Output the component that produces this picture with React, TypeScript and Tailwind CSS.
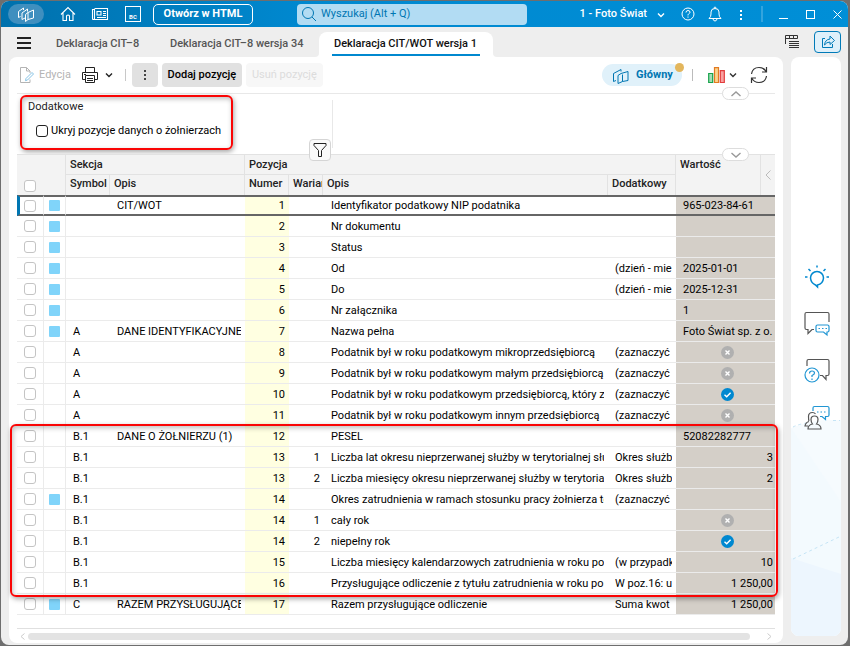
import type { ReactNode } from "react";
import { clsx } from "clsx";

type Value = string | boolean;

type Row = {
  marked?: boolean;
  symbol?: string;
  section?: string;
  number: number;
  variant?: number;
  name: string;
  extra?: string;
  value?: Value;
  numeric?: boolean;
};

const rows: Row[] = [
  { marked: true, section: "CIT/WOT", number: 1, name: "Identyfikator podatkowy NIP podatnika", value: "965-023-84-61" },
  { marked: true, number: 2, name: "Nr dokumentu" },
  { marked: true, number: 3, name: "Status" },
  { marked: true, number: 4, name: "Od", extra: "(dzień - mie", value: "2025-01-01" },
  { marked: true, number: 5, name: "Do", extra: "(dzień - mie", value: "2025-12-31" },
  { marked: true, number: 6, name: "Nr załącznika", value: "1" },
  { marked: true, symbol: "A", section: "DANE IDENTYFIKACYJNE", number: 7, name: "Nazwa pełna", value: "Foto Świat sp. z o." },
  { symbol: "A", number: 8, name: "Podatnik był w roku podatkowym mikroprzedsiębiorcą", extra: "(zaznaczyć", value: false },
  { symbol: "A", number: 9, name: "Podatnik był w roku podatkowym małym przedsiębiorcą", extra: "(zaznaczyć", value: false },
  { symbol: "A", number: 10, name: "Podatnik był w roku podatkowym przedsiębiorcą, który z", extra: "(zaznaczyć", value: true },
  { symbol: "A", number: 11, name: "Podatnik był w roku podatkowym innym przedsiębiorcą", extra: "(zaznaczyć", value: false },
  { symbol: "B.1", section: "DANE O ŻOŁNIERZU (1)", number: 12, name: "PESEL", value: "52082282777" },
  { symbol: "B.1", number: 13, variant: 1, name: "Liczba lat okresu nieprzerwanej służby w terytorialnej słu", extra: "Okres służb", value: "3", numeric: true },
  { symbol: "B.1", number: 13, variant: 2, name: "Liczba miesięcy okresu nieprzerwanej służby w terytoria", extra: "Okres służb", value: "2", numeric: true },
  { marked: true, symbol: "B.1", number: 14, name: "Okres zatrudnienia w ramach stosunku pracy żołnierza te", extra: "(zaznaczyć" },
  { symbol: "B.1", number: 14, variant: 1, name: "cały rok", value: false },
  { symbol: "B.1", number: 14, variant: 2, name: "niepełny rok", value: true },
  { symbol: "B.1", number: 15, name: "Liczba miesięcy kalendarzowych zatrudnienia w roku po", extra: "(w przypadk", value: "10", numeric: true },
  { symbol: "B.1", number: 16, name: "Przysługujące odliczenie z tytułu zatrudnienia w roku po", extra: "W poz.16: u", value: "1 250,00", numeric: true },
  { marked: true, symbol: "C", section: "RAZEM PRZYSŁUGUJĄCE", number: 17, name: "Razem przysługujące odliczenie", extra: "Suma kwot", value: "1 250,00", numeric: true },
];

type IconProps = {
  className?: string;
  viewBox: string;
  children: ReactNode;
};

function Icon({ className, viewBox, children }: IconProps) {
  return (
    <svg
      className={clsx("shrink-0", className)}
      viewBox={viewBox}
      fill="none"
      stroke="currentColor"
      strokeWidth="1"
      aria-hidden="true"
    >
      {children}
    </svg>
  );
}

function Chevron({ className }: { className?: string }) {
  return (
    <Icon className={clsx("h-2 w-2", className)} viewBox="0 0 8 8">
      <path d="M1 2.500 4 5.500 7 2.500" strokeWidth="1.400" />
    </Icon>
  );
}

function TitleBar() {
  return (
    <header className="flex h-[26px] items-center bg-linear-to-r from-[#0071ad] via-[#0088cf] via-35% to-[#008fd7] pl-[7px] text-white">
      <button aria-label="Start" className="flex h-5 w-9 shrink-0 items-center justify-center rounded-full bg-[#3f8fbf]">
        <Icon className="h-[18px] w-[18px]" viewBox="0 0 18 18">
          <path d="M1.500 12.500V6.500L6.500 3v2M1.500 12.500l2-1M5 14.500V8L10.500 4v2.500M5 14.500l3-1.500M8.500 16.500V9.500L11 7.500v7ZM11 7.500l5.500-2.500v8L11 14.500" />
        </Icon>
      </button>
      <button aria-label="Strona główna" className="ml-4 shrink-0">
        <Icon className="h-4 w-4" viewBox="0 0 16 16">
          <path d="M1 8.500 8 1.500l7 7M3 7v7.500h3.500V10q0-1 1.500-1t1.500 1v4.500H13V7" strokeWidth="1.100" />
        </Icon>
      </button>
      <button aria-label="Aktualności" className="ml-[15px] shrink-0">
        <Icon className="h-4 w-[18px]" viewBox="0 0 18 16">
          <path d="M3.500 2.500h13v11H2q-.5 0-.5-1v-9h2v9q0 1-1 1M6 5.500h4v3.500H6zM12 5.500h3M12 7.500h3M12 9.500h3M6 11.500h9" strokeWidth="1.100" />
        </Icon>
      </button>
      <button aria-label="BC" className="ml-4 flex h-4 w-4 shrink-0 items-end justify-center border border-white text-[6px] leading-[9px] font-bold">
        BC
      </button>
      <button className="ml-3 h-[21px] w-[100px] shrink-0 rounded-[5px] border border-white text-[11px] leading-4 font-bold">
        Otwórz w HTML
      </button>
      <label className="ml-11 flex h-[21px] w-[230px] shrink-0 items-center rounded bg-[#b2dcf3] pl-1 text-[#0076b2]">
        <Icon className="h-4 w-4" viewBox="0 0 16 16">
          <circle cx="7" cy="7" r="5.500" />
          <path d="m11 11 4 4" />
        </Icon>
        <input
          type="search"
          aria-label="Wyszukaj"
          placeholder="Wyszukaj (Alt + Q)"
          className="ml-1 w-full bg-transparent text-[11px] outline-none placeholder:text-[#0076b2]"
        />
      </label>
      <button className="ml-auto flex shrink-0 items-center gap-2.5 pt-px text-[11px] font-medium">
        1 - Foto Świat
        <Chevron />
      </button>
      <button aria-label="Pomoc" className="ml-4 shrink-0">
        <Icon className="h-[14px] w-[14px]" viewBox="0 0 14 14">
          <circle cx="7" cy="7" r="6" />
          <path d="M5 5.500q0-2 2-2t2 1.700Q9 6.300 7.500 7 7 7.300 7 8.500M7 9.500v1.200" />
        </Icon>
      </button>
      <button aria-label="Powiadomienia" className="ml-[13px] shrink-0">
        <Icon className="h-4 w-[14px]" viewBox="0 0 14 16">
          <path d="M1 12.500q2-1.500 2-4.500V6q0-3.500 4-3.500T11 6v2q0 3 2 4.500ZM6 2.500q0-1.500 1-1.500t1 1.500M5 13q.5 2 2 2t2-2" />
        </Icon>
      </button>
      <button aria-label="Więcej" className="ml-[18px] flex shrink-0 flex-col gap-0.5 pt-px">
        <i className="h-0.5 w-0.5 bg-white" />
        <i className="h-0.5 w-0.5 bg-white" />
        <i className="h-0.5 w-0.5 bg-white" />
      </button>
      <div className="ml-[19px] h-4 w-0.5 bg-white/20" />
      <button aria-label="Minimalizuj" className="ml-4 flex h-[11px] w-[9px] shrink-0 items-end">
        <i className="mb-px h-px w-full bg-white" />
      </button>
      <button aria-label="Maksymalizuj" className="ml-[18px] h-[9px] w-[9px] shrink-0 border border-white" />
      <button aria-label="Zamknij" className="mr-1.5 ml-[18px] shrink-0">
        <Icon className="h-[9px] w-[9px]" viewBox="0 0 9 9">
          <path d="m.5.5 8 8M8.500.5l-8 8" />
        </Icon>
      </button>
    </header>
  );
}

function Tabs() {
  return (
    <nav className="flex h-[30px] items-center pl-4 text-[11px] font-medium text-[#555]">
      <button aria-label="Menu" className="flex w-[14px] shrink-0 flex-col gap-[3px] pt-0.5">
        <i className="h-0.5 w-full bg-[#222]" />
        <i className="h-0.5 w-full bg-[#222]" />
        <i className="h-0.5 w-full bg-[#222]" />
      </button>
      <a href="#cit-8" className="ml-[25px] w-[114px] shrink-0 pt-1">Deklaracja CIT–8</a>
      <a href="#cit-8-34" className="w-[149px] shrink-0 pt-1">Deklaracja CIT–8 wersja 34</a>
      <a href="#cit-wot" aria-current="page" className="relative flex h-[25px] w-[174px] shrink-0 justify-center self-end rounded-t-lg bg-white text-[#111]">
        <span className="absolute bottom-0 -left-1 h-1 w-1 overflow-hidden">
          <i className="block h-1 w-1 rounded-br shadow-[2px_2px_0_2px_white]" />
        </span>
        <span className="h-6 w-[148px] border-b-2 border-[#0088cf] pt-px pl-0.5 leading-[22px] whitespace-nowrap">Deklaracja CIT/WOT wersja 1</span>
        <span className="absolute -right-1 bottom-0 h-1 w-1 overflow-hidden">
          <i className="block h-1 w-1 rounded-bl shadow-[-2px_2px_0_2px_white]" />
        </span>
      </a>
      <button aria-label="Układ zakładek" className="ml-auto shrink-0 text-[#333]">
        <Icon className="h-[14px] w-4" viewBox="0 0 16 14">
          <path d="M1.500 9V.5h12v3h-12M5.500.5v3M9.500.5v3M5 6.500h10M5 8.500h10M5 10.500h10M5 12.500h10" />
        </Icon>
      </button>
      <button aria-label="Udostępnij" className="mr-[7px] ml-[14px] flex h-[22px] w-[27px] shrink-0 items-center justify-center rounded border border-[#007ab8] bg-[#dff0fa] text-[#007ab8]">
        <Icon className="h-4 w-4" viewBox="0 0 16 16">
          <path d="M5 4.500H2.500v9h10V10M4.500 11Q5 5.500 10 5V2l4.500 4.500L10 10.500V8Q6.500 8 4.500 11Z" />
        </Icon>
      </button>
    </nav>
  );
}

function Toolbar() {
  return (
    <div className="relative mr-2 ml-2 flex h-[37px] items-center border-b border-[#e8e8e8] text-[11px] text-black">
      <button disabled className="ml-0.5 flex shrink-0 items-center gap-1 text-[#b4b4b4]">
        <Icon className="h-4 w-4" viewBox="0 0 16 16">
          <path d="M11 12.500v3H1.500V.5h6L11 4v2M7.500.5V4H11" />
          <path d="m7 11.500 6-6 1.500 1.500-6 6-2 .7Z" className="stroke-[#86c3e6]" />
        </Icon>
        Edycja
      </button>
      <button aria-label="Drukuj" className="ml-[11px] flex shrink-0 items-center gap-[7px] text-[#222]">
        <Icon className="h-4 w-4" viewBox="0 0 16 16">
          <path d="M3.500 5V.5h9V5M3.500 12.500h-3v-7h15v7h-3M3.500 8.500h9v7h-9zM5 11.500h6M5 13.500h6M2 7.500h2" />
        </Icon>
        <Chevron />
      </button>
      <div className="ml-3 h-3 w-px shrink-0 bg-[#c8c8c8]" />
      <button aria-label="Więcej" className="ml-1.5 flex h-6 w-[26px] shrink-0 flex-col items-center justify-center gap-0.5 rounded bg-[#e1e1e1]">
        <i className="h-0.5 w-0.5 bg-[#444]" />
        <i className="h-0.5 w-0.5 bg-[#444]" />
        <i className="h-0.5 w-0.5 bg-[#444]" />
      </button>
      <button className="ml-1 h-6 w-20 shrink-0 rounded bg-[#e1e1e1] pt-px font-medium whitespace-nowrap">Dodaj pozycję</button>
      <button disabled className="ml-1 h-6 w-[77px] shrink-0 rounded bg-[#f7f7f7] pt-px whitespace-nowrap text-[#dcdcdc]">Usuń pozycję</button>
      <button className="relative ml-auto flex h-[22px] w-20 shrink-0 items-center gap-[7px] rounded-full bg-[#e0f1fa] pt-px pl-[11px] font-bold text-[#0076b2]">
        <Icon className="h-4 w-4" viewBox="0 0 16 16">
          <path d="M3 12.500.5 13.500V5.500L8 1.500v2M5 15.500V7.500L8 5.500l7-2v9l-5.500 1ZM9.500 13.500v-7" />
        </Icon>
        Główny
        <i className="absolute -top-px -right-0.5 h-[9px] w-[9px] rounded-full bg-[#e3b65c]" />
      </button>
      <div className="ml-2.5 h-3 w-px shrink-0 bg-[#bbb]" />
      <button aria-label="Wykresy" className="ml-[15px] flex shrink-0 items-center gap-1 text-[#333]">
        <Icon className="h-4 w-[17px]" viewBox="0 0 17 16">
          <path d="M.7 6.500h4v9h-4z" className="fill-[#a5dcb8] stroke-[#16a34a]" strokeWidth="1.200" />
          <path d="M6.500.7h4v14.800h-4z" className="fill-[#fbd58e] stroke-[#e27a22]" strokeWidth="1.200" />
          <path d="M12.300 3.700h4v11.800h-4z" className="fill-[#f9a1a1] stroke-[#e23c3c]" strokeWidth="1.200" />
        </Icon>
        <Chevron />
      </button>
      <button aria-label="Odśwież" className="mr-[7px] ml-[13px] shrink-0 text-[#333]">
        <Icon className="h-[18px] w-[18px]" viewBox="0 0 18 18">
          <path d="M1.500 8Q2.500 1.500 9 1.500q5 0 7.500 4.500M16.500 1v5H12M16.500 10q-1 6.500-7.500 6.500-5 0-7.500-4.500M1.500 17v-5H6" strokeWidth="1.200" />
        </Icon>
      </button>
      <button aria-label="Zwiń panel" className="absolute right-[26px] -bottom-[7px] flex h-[13px] w-[27px] items-center justify-center rounded-full border border-[#ddd] bg-white text-[#999]">
        <Icon className="h-1.5 w-2.5" viewBox="0 0 10 6">
          <path d="M.5 5 5 1l4.500 4" strokeWidth="1.400" />
        </Icon>
      </button>
    </div>
  );
}

function FilterPane() {
  return (
    <div className="relative mx-2 h-[60px] pt-px pl-[3px] text-[11px] text-[#222]">
      <fieldset className="h-[55px] w-[213px] rounded-md border-2 border-[#fa0505] pl-1.5 shadow-[1px_2px_5px_rgba(0,0,0,0.35),inset_1px_2px_5px_rgba(0,0,0,0.25)]">
        <legend className="float-left w-full pt-1 leading-3">Dodatkowe</legend>
        <label className="clear-both flex items-center gap-[3px] pt-2.5 pl-2 leading-4 whitespace-nowrap text-black">
          <input type="checkbox" className="h-3 w-3 appearance-none rounded-[3px] border border-[#222] bg-white" />
          Ukryj pozycje danych o żołnierzach
        </label>
      </fieldset>
      <div className="absolute top-1.5 left-[315px] h-12 w-px bg-[#e8e8e8]" />
      <button aria-label="Filtr" className="absolute top-[45px] left-[292px] z-10 flex h-[22px] w-[22px] items-center justify-center rounded border border-[#d5d5d5] bg-[#fafafa] text-[#222]">
        <Icon className="h-[14px] w-[14px]" viewBox="0 0 14 14">
          <path d="M1 .5h12v2L8.500 7.500v6h-3v-6L1 2.500Z" />
        </Icon>
      </button>
      <button aria-label="Rozwiń panel" className="absolute right-[26px] -bottom-[7px] z-10 flex h-[13px] w-[27px] items-center justify-center rounded-full border border-[#ddd] bg-white text-[#999]">
        <Icon className="h-1.5 w-2.5" viewBox="0 0 10 6">
          <path d="M.5 1 5 5l4.500-4" strokeWidth="1.400" />
        </Icon>
      </button>
    </div>
  );
}

function ValueMark({ checked }: { checked: boolean }) {
  return (
    <svg className="mx-auto h-[13px] w-[13px]" viewBox="0 0 13 13" role="img" aria-label={checked ? "tak" : "nie"}>
      <circle cx="6.500" cy="6.500" r="6.500" className={checked ? "fill-[#0088d0]" : "fill-[#b0b0b0]"} />
      <path
        d={checked ? "M3.500 6.700 5.700 8.800 9.600 4.800" : "m4.500 4.500 4 4M8.500 4.500l-4 4"}
        fill="none"
        stroke="white"
        strokeWidth="1.400"
      />
    </svg>
  );
}

const head = "overflow-hidden border-[#e2e2e2] pl-1 text-left align-top font-medium whitespace-nowrap";
const box = "block h-3 w-3 appearance-none rounded-[3px] border border-[#c4c4c4] bg-white";

function DeclarationTable() {
  return (
    <table className="w-full table-fixed border-separate border-spacing-0 text-[11px] leading-4 text-black">
      <colgroup>
        <col className="w-[27px]" />
        <col className="w-[22px]" />
        <col className="w-11" />
        <col className="w-[135px]" />
        <col className="w-11" />
        <col className="w-[34px]" />
        <col />
        <col className="w-[68px]" />
        <col className="w-[85px]" />
        <col className="w-[14px]" />
      </colgroup>
      <thead className="bg-[#f3f3f3] text-[#222]">
        <tr className="h-[21px]">
          <th colSpan={2} rowSpan={2} className="border-t border-r border-[#e2e2e2] pb-[3px] pl-[7px] align-bottom">
            <input type="checkbox" aria-label="Zaznacz wszystkie" className={box} />
          </th>
          <th colSpan={2} className={clsx(head, "border-t border-r border-b pt-0.5")}>Sekcja</th>
          <th colSpan={4} className={clsx(head, "border-t border-r border-b pt-0.5")}>Pozycja</th>
          <th rowSpan={2} className={clsx(head, "border-t border-r pt-0.5")}>Wartość</th>
          <th rowSpan={2} className="border-t border-[#e2e2e2] text-[#bbb]">
            <Icon className="mx-auto h-2.5 w-1.5" viewBox="0 0 6 10">
              <path d="M5.500.5 1 5l4.500 4.500" />
            </Icon>
          </th>
        </tr>
        <tr className="h-5">
          <th className={clsx(head, "border-r pt-px")}>Symbol</th>
          <th className={clsx(head, "border-r pt-px")}>Opis</th>
          <th className={clsx(head, "border-r pt-px")}>Numer</th>
          <th className={clsx(head, "border-r pt-px")}>Wariant</th>
          <th className={clsx(head, "border-r pt-px")}>Opis</th>
          <th className={clsx(head, "border-r pt-px")}>Dodatkowy</th>
        </tr>
      </thead>
      <tbody>
        {rows.map((row, index) => {
          const selected = index === 0;
          const line = selected ? "border-y-2 border-y-[#666]" : "border-b border-b-[#ebebeb]";
          const cell = clsx("overflow-hidden whitespace-nowrap", line, !selected && "pt-0.5");
          return (
            <tr key={index} className="h-[21px]">
              <td className={clsx(line, "border-r border-r-[#ebebeb]", selected ? "border-l-3 border-l-[#0076b2] pl-1" : "pl-[7px]")}>
                <input type="checkbox" aria-label={`Pozycja ${row.number}`} className={box} />
              </td>
              <td className={clsx(line, "border-r border-r-[#ebebeb] pl-[5px]")}>
                {row.marked && <i className="block h-[11px] w-[11px] rounded-[1px] bg-[#80d4fa]" />}
              </td>
              <td className={clsx(cell, "pl-[7px]")}>{row.symbol}</td>
              <td className={clsx(cell, "pr-1 pl-[7px]")}>
                <div className="overflow-hidden">{row.section}</div>
              </td>
              <td className={clsx(cell, "bg-[#ffffe1] pr-1 text-right")}>{row.number}</td>
              <td className={clsx(cell, "pr-[3px] text-right")}>{row.variant}</td>
              <td className={clsx(cell, "pr-1 pl-2")}>
                <div className="overflow-hidden">{row.name}</div>
              </td>
              <td className={clsx(cell, "pr-1 pl-[7px]")}>
                <div className="overflow-hidden">{row.extra}</div>
              </td>
              {typeof row.value === "boolean" ? (
                <td colSpan={2} className={clsx(line, "bg-[#d4cfc8] pr-0.5 pl-1.5")}>
                  <ValueMark checked={row.value} />
                </td>
              ) : (
                <td colSpan={2} className={clsx(cell, "bg-[#d4cfc8] pr-0.5 pl-[7px]", row.numeric && "text-right")}>
                  {row.value}
                </td>
              )}
            </tr>
          );
        })}
      </tbody>
    </table>
  );
}

function SidePanel() {
  return (
    <aside className="relative mb-[9px] flex w-[50px] shrink-0 flex-col items-center overflow-hidden rounded-lg bg-white pt-[207px]">
      <svg className="absolute inset-x-0 bottom-0 h-[216px] w-full" viewBox="0 0 50 216" preserveAspectRatio="none" aria-hidden="true">
        <path d="M0 8Q25-2 50 0V216H0Z" fill="#f6fbfe" />
        <path d="M0 8 50 82V216H0Z" fill="#f3fafe" />
        <path d="M0 138 50 154V216H0Z" fill="#edf6fe" />
        <path d="M2 7q6-3 14-4M42 .5h7M2 139 48 117" fill="none" stroke="#c5e4f5" strokeDasharray="3 3" />
      </svg>
      <div className="relative flex flex-col gap-[21px] pl-0.5 text-[#555]">
        <button aria-label="Wskazówki" className="text-[#0088cf]">
          <Icon className="h-[26px] w-[26px]" viewBox="0 0 26 26">
            <path d="M13.500 23V21q5.500-1 6-7a6.500 6.500 0 1 0-13 0q.5 5 5 7ZM13 1.500v2M4.500 5l2 2M21.500 5l-2 2M1 13h2.500M22.500 13H25" strokeWidth="1.500" />
          </Icon>
        </button>
        <button aria-label="Czat">
          <Icon className="h-[26px] w-[26px]" viewBox="0 0 26 26">
            <path d="M25 11V3q0-1.500-1.500-1.500h-21Q1 1.500 1 3v14q0 1.500 1.500 1.500H4v4l4-4h2" strokeWidth="1.200" />
            <path d="M13.500 14h10q1.500 0 1.500 1.500v4q0 1.500-1.500 1.500H23v3l-3.500-3h-6q-1.500 0-1.500-1.500v-4Q12 14 13.500 14ZM14.500 17.500h1.500M18 17.500h1.500M21.500 17.500H23" className="stroke-[#2196d3]" strokeWidth="1.200" />
          </Icon>
        </button>
        <button aria-label="Pytania">
          <Icon className="h-[26px] w-[26px]" viewBox="0 0 26 26">
            <path d="M3 8V3q0-1.500 1.500-1.500h19Q25 1.500 25 3v13q0 1.500-1.500 1.500H22v4l-3.500-4H16" strokeWidth="1.200" />
            <circle cx="8" cy="17" r="7" className="stroke-[#2196d3]" strokeWidth="1.200" />
            <path d="M5.500 15.500q0-2.500 2.500-2.500t2.500 2Q10.500 16.500 8 17.500v1.500M8 20.500V22" className="stroke-[#2196d3]" strokeWidth="1.200" />
          </Icon>
        </button>
        <button aria-label="Społeczność">
          <Icon className="h-[26px] w-[26px]" viewBox="0 0 26 26">
            <path d="M9 6V3q0-1.500 1.500-1.500h13Q25 1.500 25 3v7q0 1.500-1.500 1.500h-2v3l-3.500-3h-2M13 7h1.500M16.500 7H18M20 7h1.500" className="stroke-[#2196d3]" strokeWidth="1.200" />
            <path d="M4 24q0-4 4.500-5Q7 17 7 14.500 7 11 10.500 11t3.500 3.500q0 2.500-1.500 4.500 4.500 1 4.500 5ZM5 16Q4.500 15 4.500 11.500q0-4 4-4 2 0 3 1.500M5 16.500q-3.500 1-4 4.500h3" strokeWidth="1.200" />
          </Icon>
        </button>
      </div>
    </aside>
  );
}

export default function App() {
  return (
    <div className="flex min-h-screen bg-[#6e6e6e] py-px pr-0.5 pl-px font-[Roboto,sans-serif]">
      <div className="flex min-w-0 flex-1 flex-col overflow-hidden rounded-lg bg-[#eeeeee]">
        <TitleBar />
        <Tabs />
        <div className="flex flex-1 gap-2 pr-[7px] pl-2">
          <main className="mb-0.5 flex min-w-0 flex-1 flex-col rounded-lg bg-white">
            <Toolbar />
            <FilterPane />
            <div className="relative px-2">
              <DeclarationTable />
              {/* highlighted group: rows 12-16 */}
              <div className="pointer-events-none absolute top-[270px] right-[5px] left-px h-[173px] rounded-md border-2 border-[#fa0505] shadow-[1px_2px_5px_rgba(0,0,0,0.35),inset_1px_2px_5px_rgba(0,0,0,0.25)]" />
            </div>
            <div className="mx-2 mt-auto flex h-[15px] items-center border-t border-[#e0e0e0] px-[3px] text-[#ccc]">
              <Icon className="h-[7px] w-[5px]" viewBox="0 0 5 7">
                <path d="M4.500.5 1 3.500l3.500 3" />
              </Icon>
              <div className="mr-[17px] ml-[3px] h-[7px] flex-1 rounded-full bg-[#e3e3e3]" />
              <Icon className="h-[7px] w-[5px]" viewBox="0 0 5 7">
                <path d="M.5.5 4 3.500.5 6.500" />
              </Icon>
            </div>
          </main>
          <SidePanel />
        </div>
      </div>
    </div>
  );
}
